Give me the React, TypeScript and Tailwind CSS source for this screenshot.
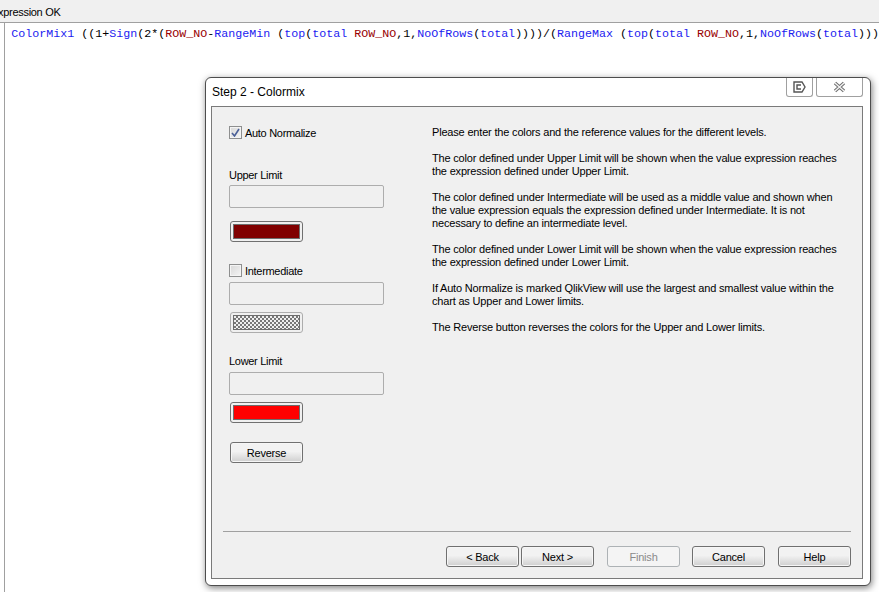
import React from "react";

const Fn = ({ t }: { t: string }) => <span className="text-[#1c1cf0]">{t}</span>;
const Fld = ({ t }: { t: string }) => <span className="text-[#990000]">{t}</span>;

function ColorBtn({ fill, dark }: { fill: string; dark: boolean }) {
  return (
    <div className={`w-[73px] h-[21px] ml-[1px] rounded-[3px] border bg-[#f0f0f0] p-[2px] ${dark ? "border-[#707070]" : "border-[#adadad]"}`}>
      <div className={`w-full h-full border border-[#6d6d6d] ${fill}`} />
    </div>
  );
}

function Field() {
  return <div className="w-[155px] h-[23px] rounded-[2px] border border-[#adadad] bg-[#f0f0f0]" />;
}

function Check({ checked, label }: { checked: boolean; label: string }) {
  return (
    <div className="flex items-center h-[13px] gap-[3px]">
      <div className="w-[13px] h-[13px] border border-[#8e8f8f] bg-gradient-to-br from-[#d8d8d8] to-[#f4f4f4] shadow-[inset_0_0_0_1px_#f4f4f4] flex items-center justify-center">
        {checked && (
          <svg width="9" height="9" viewBox="0 0 9 9">
            <path d="M1 5 L3.5 8 L8 1" stroke="#4a5f97" strokeWidth="1.6" fill="none" />
          </svg>
        )}
      </div>
      <span className="mt-[2px] tracking-[-0.3px]">{label}</span>
    </div>
  );
}

function Btn({ label, disabled, className = "" }: { label: string; disabled?: boolean; className?: string }) {
  return (
    <div
      className={`w-[73px] h-[21px] pt-[2px] rounded-[3px] border flex items-center justify-center ${
        disabled
          ? "border-[#adb2b5] bg-[#f4f4f4] text-[#8a8a8a]"
          : "border-[#707070] bg-gradient-to-b from-[#f2f2f2] from-45% to-[#cfcfcf] shadow-[inset_0_0_0_1px_#f6f6f6] text-black"
      } ${className}`}
    >
      {label}
    </div>
  );
}

const paragraphs = [
  ["Please enter the colors and the reference values for the different levels."],
  ["The color defined under Upper Limit will be shown when the value expression reaches", "the expression defined under Upper Limit."],
  ["The color defined under Intermediate will be used as a middle value and shown when", "the value expression equals the expression defined under Intermediate. It is not", "necessary to define an intermediate level."],
  ["The color defined under Lower Limit will be shown when the value expression reaches", "the expression defined under Lower Limit."],
  ["If Auto Normalize is marked QlikView will use the largest and smallest value within the", "chart as Upper and Lower limits."],
  ["The Reverse button reverses the colors for the Upper and Lower limits."],
];

export default function App() {
  return (
    <div className="relative w-[879px] h-[592px] overflow-hidden bg-white font-['Liberation_Sans',sans-serif] text-[11px] text-black">
      <div className="h-[23px] pt-[2px] bg-[#f0f0f0] border-b border-[#a0a0a0] flex items-center text-[11px] tracking-[-0.3px] leading-none">
        <span className="-ml-[9px]">Expression OK</span>
      </div>
      <div className="flex h-[569px]">
        <div className="w-[7px] border-r border-[#a0a0a0]" />
        <div className="pl-[6px] pt-[4px] font-['Liberation_Mono',monospace] text-[11.67px] leading-[14px] whitespace-pre text-black">
          <Fn t="ColorMix1" /> ((1+<Fn t="Sign" />(2*(<Fld t="ROW_NO" />-<Fn t="RangeMin" /> (<Fn t="top" />(<Fn t="total" /> <Fld t="ROW_NO" />,1,<Fn t="NoOfRows" />(<Fn t="total" />))))/(<Fn t="RangeMax" /> (<Fn t="top" />(<Fn t="total" /> <Fld t="ROW_NO" />,1,<Fn t="NoOfRows" />(<Fn t="total" />)))
        </div>
      </div>

      <div className="absolute left-[205px] top-[77px] w-[666px] h-[509px] rounded-[6px] border border-[#4d4d4d] bg-white shadow-[1px_2px_7px_rgba(0,0,0,0.5)] flex flex-col">
        <div className="h-[28px] shrink-0 flex items-start relative">
          <span className="pl-[6px] pt-[7px] text-[12px] leading-[14px]">Step 2 - Colormix</span>
          <div className="absolute top-0 right-[57px] w-[27px] h-[19px] rounded-b-[3px] border border-t-0 border-[#a0a0a0] bg-white flex items-center justify-center">
            <svg width="13" height="12" viewBox="0 0 13 12" fill="none" stroke="#555" strokeWidth="1.4">
              <path d="M1 1 H9 L12 6 L9 11 H1 Z" />
              <path d="M8 4 H4 V8 H8" />
            </svg>
          </div>
          <div className="absolute top-0 right-[7px] w-[47px] h-[19px] rounded-b-[3px] border border-t-0 border-[#a0a0a0] bg-white flex items-center justify-center">
            <svg width="13" height="12" viewBox="0 0 13 12" fill="none">
              <path d="M2 2 L11 10 M11 2 L2 10" stroke="#707070" strokeWidth="3.4" />
              <path d="M2 2 L11 10 M11 2 L2 10" stroke="#f4f4f4" strokeWidth="1.4" />
            </svg>
          </div>
        </div>
        <div className="ml-[5px] mr-[7px] mb-[6px] flex-1 border border-[#7a7a7a] bg-[#f0f0f0] flex flex-col">
          <div className="flex-1 flex">
            <div className="w-[220px] pl-[17px] pt-[19px] shrink-0 flex flex-col">
              <Check checked label="Auto Normalize" />
              <div className="mt-[30px] h-[13px] leading-[13px] tracking-[-0.3px]">Upper Limit</div>
              <div className="mt-[3px]"><Field /></div>
              <div className="mt-[13px]"><ColorBtn fill="bg-[#800000]" dark /></div>
              <div className="mt-[22px]"><Check checked={false} label="Intermediate" /></div>
              <div className="mt-[5px]"><Field /></div>
              <div className="mt-[7px]">
                <ColorBtn dark={false} fill="bg-[repeating-conic-gradient(#777_0_25%,#eee_0_50%)] bg-[length:4px_4px]" />
              </div>
              <div className="mt-[22px] h-[13px] leading-[13px] tracking-[-0.3px]">Lower Limit</div>
              <div className="mt-[4px]"><Field /></div>
              <div className="mt-[7px]"><ColorBtn fill="bg-[#ff0000]" dark /></div>
              <div className="mt-[19px]"><Btn label="Reverse" className="ml-[1px] tracking-[-0.2px]" /></div>
            </div>
            <div className="pt-[19px] leading-[13px] tracking-[-0.18px] flex flex-col gap-[13px] whitespace-nowrap">
              {paragraphs.map((p, i) => (
                <div key={i}>{p.map((l, j) => <div key={j}>{l}</div>)}</div>
              ))}
            </div>
          </div>
          <div className="mx-[11px] border-t border-[#a0a0a0] h-[47px] flex items-start pt-[14px] justify-end shrink-0 tracking-[-0.2px]">
            <Btn label="< Back" />
            <Btn label="Next >" className="ml-[2px]" />
            <Btn label="Finish" disabled className="ml-[13px]" />
            <Btn label="Cancel" className="ml-[12px]" />
            <Btn label="Help" className="ml-[13px]" />
          </div>
        </div>
      </div>
    </div>
  );
}
